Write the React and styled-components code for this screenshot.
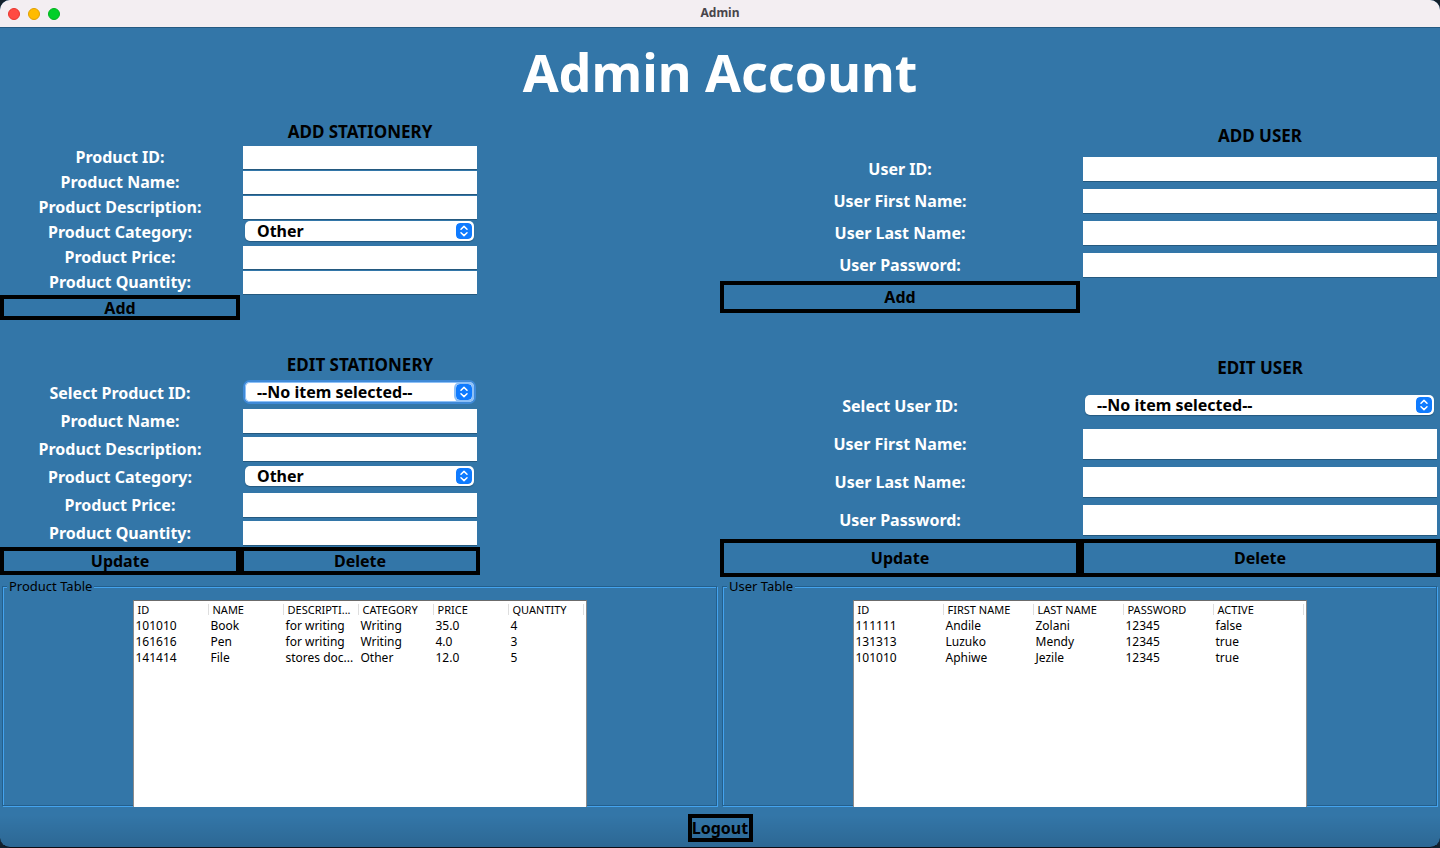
import React, { useId } from "react";
import styled, { createGlobalStyle } from "styled-components";

const GlobalStyle = createGlobalStyle`
  * { box-sizing: border-box; }
  html, body { margin: 0; padding: 0; background: #12202c; }
  body { font-family: "Noto Sans", "Open Sans", sans-serif; color: #000; }
`;

const Window = styled.div`
  min-height: 100vh;
  display: flex;
  flex-direction: column;
  border-radius: 10px;
  overflow: hidden;
  border-bottom: 1px solid #0c0c14;
  background:
    linear-gradient(to top, rgba(0, 0, 0, 0.12), rgba(0, 0, 0, 0) 32px),
    #3376a8;
`;

const TitleBar = styled.header`
  display: grid;
  grid-template-columns: 1fr auto 1fr;
  align-items: center;
  height: 28px;
  padding: 0 8px;
  background: #f3eef2;
  border-bottom: 1px solid #255a83;
`;

const WindowTitle = styled.span`
  padding-bottom: 2px;
  font-size: 12px;
  line-height: 24px;
  font-weight: 700;
  color: #48454a;
`;

const Lights = styled.div`
  display: flex;
  gap: 8px;
`;

const Light = styled.button`
  width: 12px;
  height: 12px;
  padding: 0;
  border: 1px solid ${(p) => p.$edge};
  border-radius: 50%;
  background: ${(p) => p.$fill};
`;

const PageTitle = styled.h1`
  margin: 0;
  height: 92px;
  font-size: 52px;
  line-height: 88px;
  font-weight: 700;
  text-align: center;
  color: #fff;
`;

const Columns = styled.div`
  display: grid;
  grid-template-columns: 1fr 1fr;
  align-items: ${(p) => p.$align || "start"};
  margin-bottom: ${(p) => p.$after || 0}px;
`;

const Form = styled.form`
  display: grid;
  grid-template-columns: repeat(${(p) => p.$cols}, 1fr);
  grid-template-rows: ${(p) => p.$head || p.$row}px;
  grid-auto-rows: ${(p) => p.$row}px;
`;

const Heading = styled.h2`
  grid-column: 2;
  margin: 0;
  align-self: center;
  padding-bottom: 1px;
  font-size: 17px;
  line-height: 24px;
  font-weight: 700;
  text-align: center;
`;

const Label = styled.label`
  grid-column: 1;
  align-self: center;
  padding-bottom: 1px;
  font-size: 16px;
  line-height: 24px;
  font-weight: 700;
  text-align: center;
  color: #fff;
`;

const Control = styled.div`
  grid-column: 2;
  display: flex;
  align-items: ${(p) => (p.$select ? "center" : "stretch")};
  padding: ${(p) => (p.$select ? "0 6px 3px 5px" : p.$pad)};
`;

const Input = styled.input`
  width: 100%;
  min-width: 0;
  padding: 0 6px;
  border: 0;
  border-radius: 0;
  background: #fff;
  box-shadow: 0 1px 0 #24597f;
  font: 700 16px/20px "Noto Sans", sans-serif;
`;

const SelectBox = styled.div`
  position: relative;
  width: 100%;
  height: 20px;
  border-radius: 5px;
  background: #fff;
  box-shadow: ${(p) => (p.$focus ? "0 0 0 2px #3f8ad8, inset 0 0 0 1px #8dc0f7" : "0 1px 1px #24597f")};
`;

const Select = styled.select`
  appearance: none;
  display: block;
  width: 100%;
  height: 20px;
  padding: 0 24px 0 12px;
  border: 0;
  background: transparent;
  color: #000;
  font: 700 16px/20px "Noto Sans", sans-serif;
`;

const Stepper = styled.svg`
  position: absolute;
  top: 2px;
  right: 2px;
  width: 16px;
  height: 16px;
  border-radius: 4px;
  box-shadow: ${(p) => (p.$focus ? "0 0 0 2px #8dc0f7" : "none")};
  pointer-events: none;
`;

const Button = styled.button`
  grid-column: ${(p) => p.$col || "auto"};
  padding: 0;
  border: 4px solid #000;
  background: transparent;
  color: #000;
  font: 700 16px/16px "Noto Sans", sans-serif;
`;

const LogoutButton = styled(Button)`
  width: 65px;
  height: 28px;
  white-space: nowrap;
`;

const TablePanel = styled.fieldset`
  display: flex;
  justify-content: center;
  min-width: 0;
  height: 227px;
  margin: 0 3px 0 2px;
  padding: 7px 0 0;
  border: 1px solid #245f8c;
  box-shadow: inset 1px 1px 0 #44a3ee, 1px 1px 0 #44a3ee;
`;

const Legend = styled.legend`
  margin-left: 4px;
  padding: 0 2px;
  font-size: 13px;
  line-height: 14px;
  background: #3376a8;
`;

const Viewport = styled.div`
  width: 454px;
  height: 207px;
  padding-right: 2px;
  border: 1px solid #8c8c8c;
  border-top-color: #6b6b6b;
  border-bottom: 0;
  background: #fff;
`;

const Table = styled.table`
  width: 100%;
  table-layout: fixed;
  border-collapse: collapse;
  font-size: 12px;
  line-height: 16px;

  th, td {
    overflow: hidden;
    text-overflow: ellipsis;
    white-space: nowrap;
    text-align: left;
    font-weight: 400;
  }
  th {
    height: 17px;
    padding: 0 4px;
    font-size: 11px;
    background: linear-gradient(#dedede, #dedede) no-repeat right 3px / 1px 11px;
  }
  td { padding: 0 2px; }
`;

const Footer = styled.footer`
  display: flex;
  justify-content: center;
  padding: 8px 0 5px;
`;

function Field({ label, pad, options, type = "text", focus }) {
  const id = useId();
  return (
    <>
      <Label htmlFor={id}>{label}</Label>
      {options ? (
        <Control $select>
          <SelectBox $focus={focus}>
            <Select id={id}>
              {options.map((o) => <option key={o}>{o}</option>)}
            </Select>
            <Stepper $focus={focus} viewBox="0 0 16 16" aria-hidden="true">
              <rect width="16" height="16" rx="4" fill="#0f7bff" />
              <path d="M5 6.2 8 3.4l3 2.8M5 9.8l3 2.8 3-2.8" fill="none" stroke="#fff" strokeWidth="1.5" strokeLinecap="round" strokeLinejoin="round" />
            </Stepper>
          </SelectBox>
        </Control>
      ) : (
        <Control $pad={pad}><Input id={id} type={type} /></Control>
      )}
    </>
  );
}

function DataTable({ title, columns, rows }) {
  return (
    <TablePanel>
      <Legend>{title}</Legend>
      <Viewport>
        <Table>
          <thead><tr>{columns.map((c) => <th key={c} scope="col">{c}</th>)}</tr></thead>
          <tbody>
            {rows.map((r) => (
              <tr key={r[0]}>{r.map((v, i) => <td key={i}>{v}</td>)}</tr>
            ))}
          </tbody>
        </Table>
      </Viewport>
    </TablePanel>
  );
}

const NONE = ["--No item selected--"];
const CATEGORIES = ["Other", "Writing"];
const PAD = "1px 3px";
const MID_PAD = "2px 3px";
const WIDE_PAD = "4px 3px";

export default function App() {
  return (
    <>
      <GlobalStyle />
      <Window>
        <TitleBar>
          <Lights>
            <Light type="button" aria-label="Close" $fill="#ff4a43" $edge="#e8352f" />
            <Light type="button" aria-label="Minimize" $fill="#ffbb00" $edge="#e0a000" />
            <Light type="button" aria-label="Zoom" $fill="#00cf28" $edge="#00b31e" />
          </Lights>
          <WindowTitle>Admin</WindowTitle>
        </TitleBar>
        <PageTitle>Admin Account</PageTitle>
        <Columns $after={29}>
          <Form $cols={3} $row={25}>
            <Heading>ADD STATIONERY</Heading>
            <Field label="Product ID:" pad={PAD} />
            <Field label="Product Name:" pad={PAD} />
            <Field label="Product Description:" pad={PAD} />
            <Field label="Product Category:" options={CATEGORIES} />
            <Field label="Product Price:" pad={PAD} />
            <Field label="Product Quantity:" pad={PAD} />
            <Button type="button" $col={1}>Add</Button>
          </Form>
          <Form $cols={2} $row={32} $head={33}>
            <Heading>ADD USER</Heading>
            <Field label="User ID:" pad={WIDE_PAD} />
            <Field label="User First Name:" pad={WIDE_PAD} />
            <Field label="User Last Name:" pad={WIDE_PAD} />
            <Field label="User Password:" pad={WIDE_PAD} type="password" />
            <Button type="button" $col={1}>Add</Button>
          </Form>
        </Columns>
        <Columns $align="center" $after={2}>
          <Form $cols={3} $row={28}>
            <Heading>EDIT STATIONERY</Heading>
            <Field label="Select Product ID:" options={NONE} focus />
            <Field label="Product Name:" pad={MID_PAD} />
            <Field label="Product Description:" pad={MID_PAD} />
            <Field label="Product Category:" options={CATEGORIES} />
            <Field label="Product Price:" pad={MID_PAD} />
            <Field label="Product Quantity:" pad={MID_PAD} />
            <Button type="button" $col={1}>Update</Button>
            <Button type="button" $col={2}>Delete</Button>
          </Form>
          <Form $cols={2} $row={38}>
            <Heading>EDIT USER</Heading>
            <Field label="Select User ID:" options={NONE} />
            <Field label="User First Name:" pad={WIDE_PAD} />
            <Field label="User Last Name:" pad={WIDE_PAD} />
            <Field label="User Password:" pad={WIDE_PAD} type="password" />
            <Button type="button" $col={1}>Update</Button>
            <Button type="button" $col={2}>Delete</Button>
          </Form>
        </Columns>
        <Columns>
          <DataTable
            title="Product Table"
            columns={["ID", "NAME", "DESCRIPTI...", "CATEGORY", "PRICE", "QUANTITY"]}
            rows={[
              ["101010", "Book", "for writing", "Writing", "35.0", "4"],
              ["161616", "Pen", "for writing", "Writing", "4.0", "3"],
              ["141414", "File", "stores doc...", "Other", "12.0", "5"],
            ]}
          />
          <DataTable
            title="User Table"
            columns={["ID", "FIRST NAME", "LAST NAME", "PASSWORD", "ACTIVE"]}
            rows={[
              ["111111", "Andile", "Zolani", "12345", "false"],
              ["131313", "Luzuko", "Mendy", "12345", "true"],
              ["101010", "Aphiwe", "Jezile", "12345", "true"],
            ]}
          />
        </Columns>
        <Footer>
          <LogoutButton type="button">Logout</LogoutButton>
        </Footer>
      </Window>
    </>
  );
}
